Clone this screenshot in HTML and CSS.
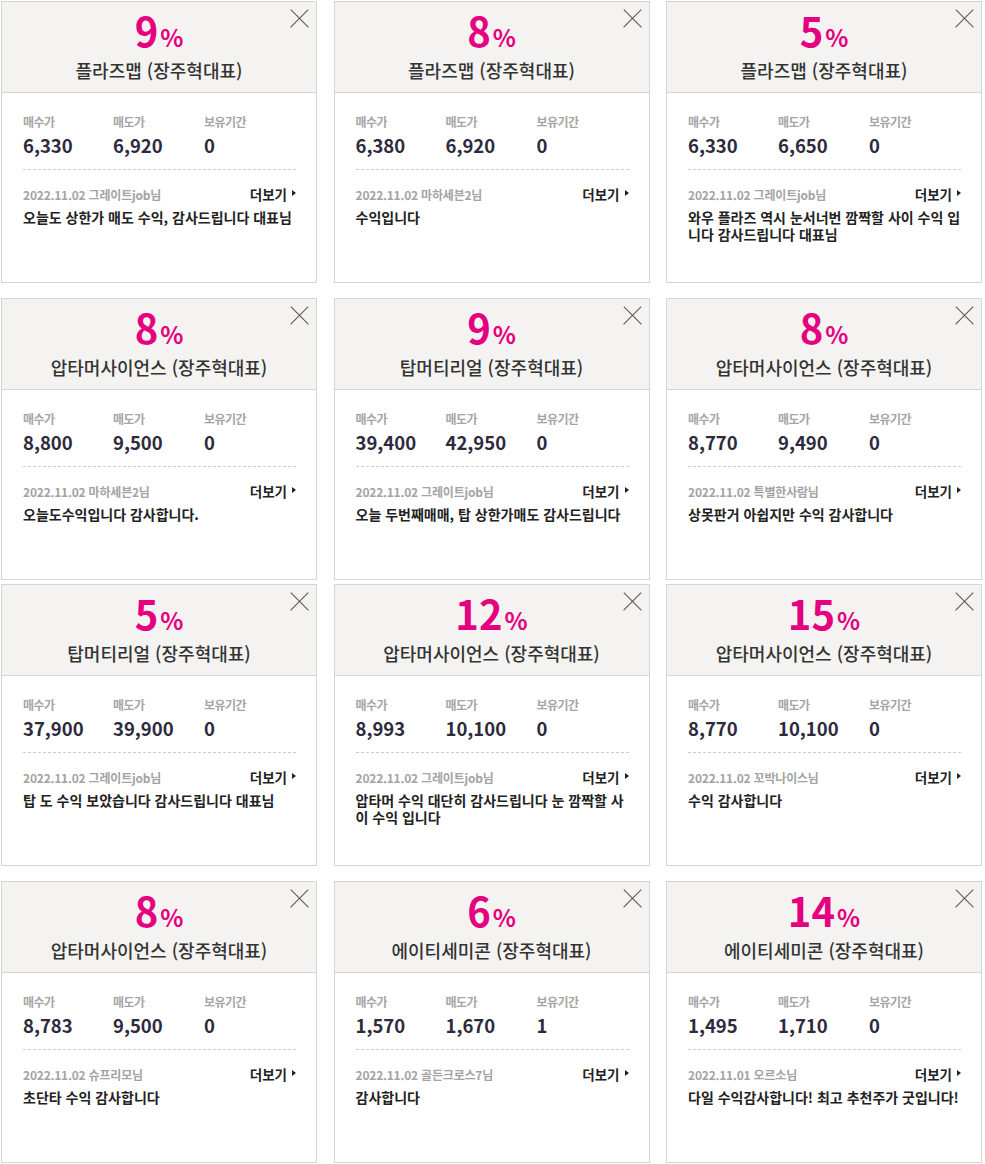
FILE: index.html
```html
<!DOCTYPE html>
<html lang="ko">
<head>
    <meta charset="UTF-8">
    <title>수익 인증</title>
    <link rel="stylesheet" href="styles.css">
</head>
<body>
    <ul class="review_list">
        <!-- 1 -->
        <li class="review">
            <div class="header">
                <p class="rate">9<span>%</span></p>
                <h2 class="title">플라즈맵 (장주혁대표)</h2>
                <button class="btn_close" aria-label="닫기"></button>
            </div>
            <div class="content">
                <dl class="price">
                    <div><dt>매수가</dt><dd>6,330</dd></div>
                    <div><dt>매도가</dt><dd>6,920</dd></div>
                    <div><dt>보유기간</dt><dd>0</dd></div>
                </dl>
                <div class="info">
                    <span class="writer">2022.11.02 그레이트job님</span>
                    <a class="more" href="#">더보기</a>
                </div>
                <p class="text">오늘도 상한가 매도 수익, 감사드립니다 대표님</p>
            </div>
        </li>
        <!-- 2 -->
        <li class="review">
            <div class="header">
                <p class="rate">8<span>%</span></p>
                <h2 class="title">플라즈맵 (장주혁대표)</h2>
                <button class="btn_close" aria-label="닫기"></button>
            </div>
            <div class="content">
                <dl class="price">
                    <div><dt>매수가</dt><dd>6,380</dd></div>
                    <div><dt>매도가</dt><dd>6,920</dd></div>
                    <div><dt>보유기간</dt><dd>0</dd></div>
                </dl>
                <div class="info">
                    <span class="writer">2022.11.02 마하세븐2님</span>
                    <a class="more" href="#">더보기</a>
                </div>
                <p class="text">수익입니다</p>
            </div>
        </li>
        <!-- 3 -->
        <li class="review">
            <div class="header">
                <p class="rate">5<span>%</span></p>
                <h2 class="title">플라즈맵 (장주혁대표)</h2>
                <button class="btn_close" aria-label="닫기"></button>
            </div>
            <div class="content">
                <dl class="price">
                    <div><dt>매수가</dt><dd>6,330</dd></div>
                    <div><dt>매도가</dt><dd>6,650</dd></div>
                    <div><dt>보유기간</dt><dd>0</dd></div>
                </dl>
                <div class="info">
                    <span class="writer">2022.11.02 그레이트job님</span>
                    <a class="more" href="#">더보기</a>
                </div>
                <p class="text">와우 플라즈 역시 눈서너번 깜짝할 사이 수익 입니다 감사드립니다 대표님</p>
            </div>
        </li>
        <!-- 4 -->
        <li class="review">
            <div class="header">
                <p class="rate">8<span>%</span></p>
                <h2 class="title">압타머사이언스 (장주혁대표)</h2>
                <button class="btn_close" aria-label="닫기"></button>
            </div>
            <div class="content">
                <dl class="price">
                    <div><dt>매수가</dt><dd>8,800</dd></div>
                    <div><dt>매도가</dt><dd>9,500</dd></div>
                    <div><dt>보유기간</dt><dd>0</dd></div>
                </dl>
                <div class="info">
                    <span class="writer">2022.11.02 마하세븐2님</span>
                    <a class="more" href="#">더보기</a>
                </div>
                <p class="text">오늘도수익입니다 감사합니다.</p>
            </div>
        </li>
        <!-- 5 -->
        <li class="review">
            <div class="header">
                <p class="rate">9<span>%</span></p>
                <h2 class="title">탑머티리얼 (장주혁대표)</h2>
                <button class="btn_close" aria-label="닫기"></button>
            </div>
            <div class="content">
                <dl class="price">
                    <div><dt>매수가</dt><dd>39,400</dd></div>
                    <div><dt>매도가</dt><dd>42,950</dd></div>
                    <div><dt>보유기간</dt><dd>0</dd></div>
                </dl>
                <div class="info">
                    <span class="writer">2022.11.02 그레이트job님</span>
                    <a class="more" href="#">더보기</a>
                </div>
                <p class="text">오늘 두번째매매, 탑 상한가매도 감사드립니다</p>
            </div>
        </li>
        <!-- 6 -->
        <li class="review">
            <div class="header">
                <p class="rate">8<span>%</span></p>
                <h2 class="title">압타머사이언스 (장주혁대표)</h2>
                <button class="btn_close" aria-label="닫기"></button>
            </div>
            <div class="content">
                <dl class="price">
                    <div><dt>매수가</dt><dd>8,770</dd></div>
                    <div><dt>매도가</dt><dd>9,490</dd></div>
                    <div><dt>보유기간</dt><dd>0</dd></div>
                </dl>
                <div class="info">
                    <span class="writer">2022.11.02 특별한사람님</span>
                    <a class="more" href="#">더보기</a>
                </div>
                <p class="text">상못판거 아쉽지만 수익 감사합니다</p>
            </div>
        </li>
        <!-- 7 -->
        <li class="review">
            <div class="header">
                <p class="rate">5<span>%</span></p>
                <h2 class="title">탑머티리얼 (장주혁대표)</h2>
                <button class="btn_close" aria-label="닫기"></button>
            </div>
            <div class="content">
                <dl class="price">
                    <div><dt>매수가</dt><dd>37,900</dd></div>
                    <div><dt>매도가</dt><dd>39,900</dd></div>
                    <div><dt>보유기간</dt><dd>0</dd></div>
                </dl>
                <div class="info">
                    <span class="writer">2022.11.02 그레이트job님</span>
                    <a class="more" href="#">더보기</a>
                </div>
                <p class="text">탑 도 수익 보았습니다 감사드립니다 대표님</p>
            </div>
        </li>
        <!-- 8 -->
        <li class="review">
            <div class="header">
                <p class="rate">12<span>%</span></p>
                <h2 class="title">압타머사이언스 (장주혁대표)</h2>
                <button class="btn_close" aria-label="닫기"></button>
            </div>
            <div class="content">
                <dl class="price">
                    <div><dt>매수가</dt><dd>8,993</dd></div>
                    <div><dt>매도가</dt><dd>10,100</dd></div>
                    <div><dt>보유기간</dt><dd>0</dd></div>
                </dl>
                <div class="info">
                    <span class="writer">2022.11.02 그레이트job님</span>
                    <a class="more" href="#">더보기</a>
                </div>
                <p class="text">압타머 수익 대단히 감사드립니다 눈 깜짝할 사이 수익 입니다</p>
            </div>
        </li>
        <!-- 9 -->
        <li class="review">
            <div class="header">
                <p class="rate">15<span>%</span></p>
                <h2 class="title">압타머사이언스 (장주혁대표)</h2>
                <button class="btn_close" aria-label="닫기"></button>
            </div>
            <div class="content">
                <dl class="price">
                    <div><dt>매수가</dt><dd>8,770</dd></div>
                    <div><dt>매도가</dt><dd>10,100</dd></div>
                    <div><dt>보유기간</dt><dd>0</dd></div>
                </dl>
                <div class="info">
                    <span class="writer">2022.11.02 꼬박나이스님</span>
                    <a class="more" href="#">더보기</a>
                </div>
                <p class="text">수익 감사합니다</p>
            </div>
        </li>
        <!-- 10 -->
        <li class="review">
            <div class="header">
                <p class="rate">8<span>%</span></p>
                <h2 class="title">압타머사이언스 (장주혁대표)</h2>
                <button class="btn_close" aria-label="닫기"></button>
            </div>
            <div class="content">
                <dl class="price">
                    <div><dt>매수가</dt><dd>8,783</dd></div>
                    <div><dt>매도가</dt><dd>9,500</dd></div>
                    <div><dt>보유기간</dt><dd>0</dd></div>
                </dl>
                <div class="info">
                    <span class="writer">2022.11.02 슈프리모님</span>
                    <a class="more" href="#">더보기</a>
                </div>
                <p class="text">초단타 수익 감사합니다</p>
            </div>
        </li>
        <!-- 11 -->
        <li class="review">
            <div class="header">
                <p class="rate">6<span>%</span></p>
                <h2 class="title">에이티세미콘 (장주혁대표)</h2>
                <button class="btn_close" aria-label="닫기"></button>
            </div>
            <div class="content">
                <dl class="price">
                    <div><dt>매수가</dt><dd>1,570</dd></div>
                    <div><dt>매도가</dt><dd>1,670</dd></div>
                    <div><dt>보유기간</dt><dd>1</dd></div>
                </dl>
                <div class="info">
                    <span class="writer">2022.11.02 골든크로스7님</span>
                    <a class="more" href="#">더보기</a>
                </div>
                <p class="text">감사합니다</p>
            </div>
        </li>
        <!-- 12 -->
        <li class="review">
            <div class="header">
                <p class="rate">14<span>%</span></p>
                <h2 class="title">에이티세미콘 (장주혁대표)</h2>
                <button class="btn_close" aria-label="닫기"></button>
            </div>
            <div class="content">
                <dl class="price">
                    <div><dt>매수가</dt><dd>1,495</dd></div>
                    <div><dt>매도가</dt><dd>1,710</dd></div>
                    <div><dt>보유기간</dt><dd>0</dd></div>
                </dl>
                <div class="info">
                    <span class="writer">2022.11.01 오르소님</span>
                    <a class="more" href="#">더보기</a>
                </div>
                <p class="text">다일 수익감사합니다! 최고 추천주가 굿입니다!</p>
            </div>
        </li>
    </ul>
</body>
</html>
```

FILE: styles.css
```css
html, body, div, span,
h1, h2, h3, h4, h5, h6, p,
a, em, strong,
dl, dt, dd, ol, ul, li{
    margin: 0;
    padding: 0;
    border: 0;
}
body{
    background-color: #fff;
    font-family: "Noto Sans CJK KR", "Noto Sans", sans-serif;
    color: #222;
}
ol, ul {
    list-style: none;
}
a{
    text-decoration: none;
    color: inherit;
}

/* 후기 목록 */
.review_list{
    display: grid;
    grid-template-columns: repeat(3, 316px);
    column-gap: 16.5px;
    row-gap: 15px;
    padding: 1px 0 0 1px;
}
.review_list .review:nth-child(n+7):nth-child(-n+9){
    margin-top: -11px;
}
.review{
    position: relative;
    box-sizing: border-box;
    height: 282px;
    border: 1px solid #d5d5d5;
    background-color: #fff;
}
.review .header{
    height: 82px;
    padding-top: 8px;
    background-color: #f4f3f1;
    border-bottom: 1px solid #d5d5d5;
    text-align: center;
}
.rate{
    font-size: 40px;
    line-height: 40px;
    font-weight: 700;
    color: #e4007f;
}
.rate span{
    margin-left: 2px;
    font-size: 24px;
    font-weight: 700;
}
.title{
    margin-top: 1px;
    font-size: 18px;
    line-height: 24px;
    font-weight: 500;
    color: #333;
}
.btn_close{
    position: absolute;
    top: 7px;
    right: 7px;
    width: 19px;
    height: 19px;
    padding: 0;
    border: 0;
    background: transparent;
    cursor: pointer;
}
.btn_close:before,
.btn_close:after{
    position: absolute;
    top: 9px;
    left: -3px;
    width: 25px;
    height: 1.4px;
    background-color: #555;
    content: "";
    transform: rotate(45deg);
}
.btn_close:after{
    transform: rotate(-45deg);
}
.content{
    padding: 21px 20px 0 21px;
}
.price{
    display: flex;
    padding-bottom: 12px;
    border-bottom: 1px dashed #ccc;
}
.price div{
    width: 90px;
}
.price div:nth-child(2){
    width: 91px;
}
.price dt{
    font-size: 12px;
    line-height: 16px;
    font-weight: 700;
    color: #a5a5a5;
    letter-spacing: -0.5px;
}
.price dd{
    margin-top: 3px;
    font-size: 18.5px;
    line-height: 24px;
    font-weight: 700;
    color: #2d2a3e;
}
.info{
    display: flex;
    justify-content: space-between;
    align-items: baseline;
    margin-top: 15px;
    line-height: 18px;
}
.writer{
    font-size: 12px;
    font-weight: 700;
    color: #a3a3a3;
    letter-spacing: -0.2px;
}
.more{
    position: relative;
    padding-right: 9px;
    font-size: 13.5px;
    font-weight: 700;
    color: #222;
}
.more:after{
    position: absolute;
    top: 50%;
    right: 0;
    margin-top: -4px;
    border-left: 4px solid #222;
    border-top: 3.5px solid transparent;
    border-bottom: 3.5px solid transparent;
    content: "";
}
.text{
    margin-top: 5px;
    font-size: 14px;
    line-height: 17px;
    font-weight: 700;
    color: #222;
}
```
